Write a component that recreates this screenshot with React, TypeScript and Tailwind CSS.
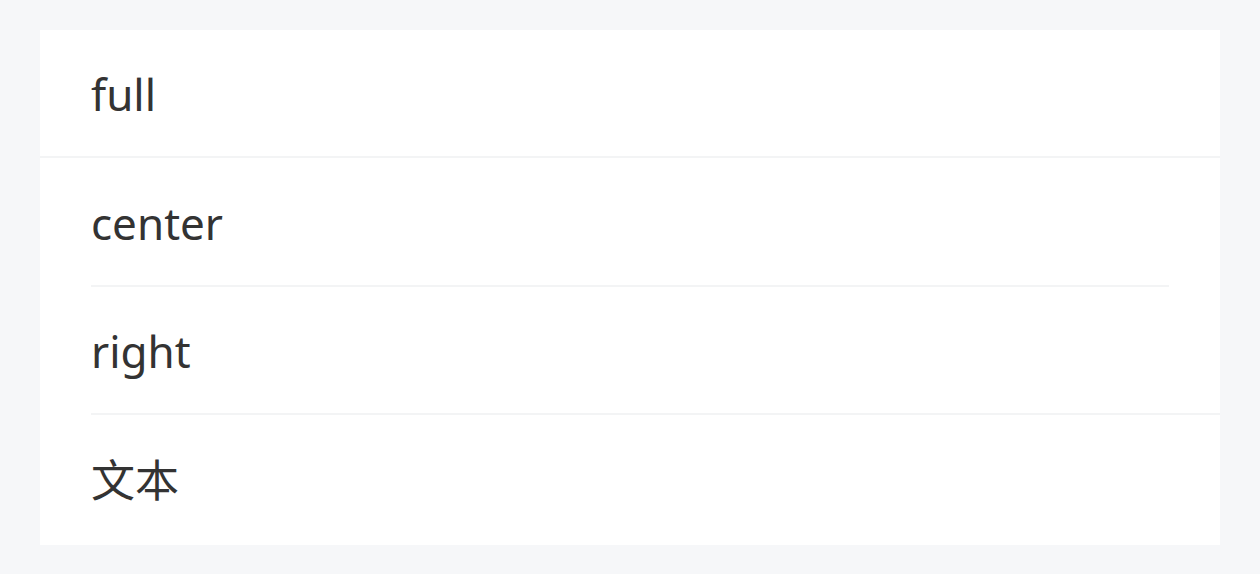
const rows = [
  { label: "full", divider: "full", h: "h-[128px]" },
  { label: "center", divider: "center", h: "h-[129px]" },
  { label: "right", divider: "right", h: "h-[128px]" },
  { label: "文本", divider: "none", h: "h-[130px]" },
];

function Row({ label, divider, h }: { label: string; divider: string; h: string }) {
  return (
    <div className={`relative flex items-center px-[51px] ${h}`}>
      <span className="text-[44px] leading-none text-[#333333]">{label}</span>
      {divider === "full" && <div className="absolute bottom-0 left-0 right-0 h-[2px] bg-[#f3f4f5]" />}
      {divider === "center" && <div className="absolute bottom-0 left-[51px] right-[51px] h-[2px] bg-[#f3f4f5]" />}
      {divider === "right" && <div className="absolute bottom-0 left-[51px] right-0 h-[2px] bg-[#f3f4f5]" />}
    </div>
  );
}

export default function App() {
  return (
    <div
      className="min-h-[574px] bg-[#f6f7f9] px-[40px] pt-[30px]"
      style={{ fontFamily: '"Noto Sans", "Noto Sans CJK SC", sans-serif' }}
    >
      <div className="bg-white">
        {rows.map((r) => (
          <Row key={r.label} label={r.label} divider={r.divider} h={r.h} />
        ))}
      </div>
    </div>
  );
}
